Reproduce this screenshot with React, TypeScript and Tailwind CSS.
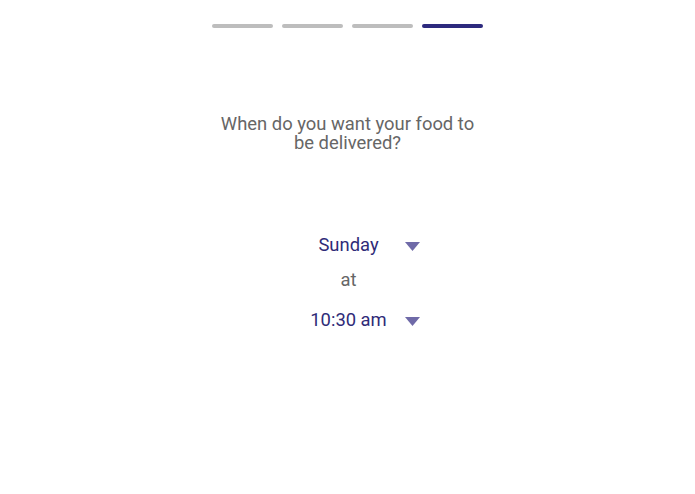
import React from "react";

function Tri() {
  return (
    <svg width="15" height="10" viewBox="0 0 15 10" className="absolute right-[1px] top-[9px]">
      <polygon points="0,0 15,0 7.5,9" fill="#6f6aa8" />
    </svg>
  );
}

export default function App() {
  return (
    <div className="w-[695px] h-[494px] bg-white flex flex-col items-center" style={{ fontFamily: "Roboto, sans-serif" }}>
      <div className="flex gap-[9px] mt-[24px]">
        <div className="w-[61px] h-[4px] rounded-full bg-[#bdbdbd]" />
        <div className="w-[61px] h-[4px] rounded-full bg-[#bdbdbd]" />
        <div className="w-[61px] h-[4px] rounded-full bg-[#bdbdbd]" />
        <div className="w-[61px] h-[4px] rounded-full bg-[#2d2a7e]" />
      </div>
      <p className="mt-[86px] w-[275px] text-center text-[18.4px] leading-[19px] text-[#666666]">
        When do you want your food to be delivered?
      </p>
      <div className="mt-[81px] ml-[2px] flex flex-col items-center">
        <div className="relative w-[144px] h-[24px] flex items-center justify-center text-[18.4px] text-[#2f2b78]">
          Sunday
          <Tri />
        </div>
        <div className="mt-[11px] h-[24px] flex items-center text-[18.4px] text-[#666666]">at</div>
        <div className="relative mt-[16px] w-[144px] h-[24px] flex items-center justify-center text-[18.4px] text-[#2f2b78]">
          10:30 am
          <Tri />
        </div>
      </div>
    </div>
  );
}
